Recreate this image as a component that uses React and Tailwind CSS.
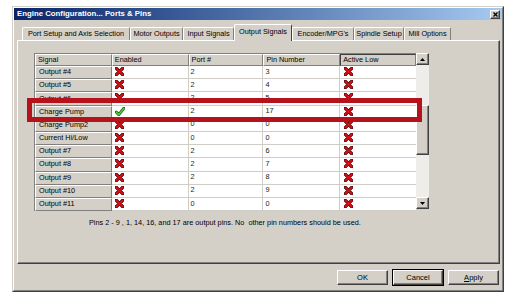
import React from "react";

const rows = [
  { signal: "Output #4", enabled: false, port: 2, pin: 3 },
  { signal: "Output #5", enabled: false, port: 2, pin: 4 },
  { signal: "Output #6", enabled: false, port: 2, pin: 5 },
  { signal: "Charge Pump", enabled: true, port: 2, pin: 17 },
  { signal: "Charge Pump2", enabled: false, port: 0, pin: 0 },
  { signal: "Current Hi/Low", enabled: false, port: 0, pin: 0 },
  { signal: "Output #7", enabled: false, port: 2, pin: 6 },
  { signal: "Output #8", enabled: false, port: 2, pin: 7 },
  { signal: "Output #9", enabled: false, port: 2, pin: 8 },
  { signal: "Output #10", enabled: false, port: 2, pin: 9 },
  { signal: "Output #11", enabled: false, port: 0, pin: 0 },
];

const tabs = [
  { label: "Port Setup and Axis Selection", w: "w-[108px]" },
  { label: "Motor Outputs", w: "w-[53px]" },
  { label: "Input Signals", w: "w-[51px]" },
  { label: "Output Signals", w: "w-[58px]", active: true },
  { label: "Encoder/MPG's", w: "w-[62px]" },
  { label: "Spindle Setup", w: "w-[50px]" },
  { label: "Mill Options", w: "w-[47px]" },
];

function RedX() {
  return (
    <svg width="9" height="9" viewBox="0 0 10 10">
      <path d="M1.5 1.5 L8.5 8.5 M8.5 1.5 L1.5 8.5" stroke="#4a0202" strokeWidth="3.8" strokeLinecap="round" />
      <path d="M1.5 1.5 L8.5 8.5 M8.5 1.5 L1.5 8.5" stroke="#d8101a" strokeWidth="2.2" strokeLinecap="round" />
    </svg>
  );
}

function GreenCheck() {
  return (
    <svg width="10" height="9" viewBox="0 0 10 9">
      <path d="M1.2 5 L3.8 7.6 L9 1.2" fill="none" stroke="#1f5a12" strokeWidth="3" strokeLinecap="round" strokeLinejoin="round" />
      <path d="M1.2 5 L3.8 7.6 L9 1.2" fill="none" stroke="#4fd13a" strokeWidth="1.5" strokeLinecap="round" strokeLinejoin="round" />
    </svg>
  );
}

function Arrow({ down }) {
  return (
    <svg width="5" height="3" viewBox="0 0 5 3">
      <path d={down ? "M0 0 L5 0 L2.5 3 Z" : "M0 3 L5 3 L2.5 0 Z"} fill="#000" />
    </svg>
  );
}

const raised =
  "bg-[#d4d0c8] border border-t-white border-l-white border-r-[#404040] border-b-[#404040] shadow-[inset_-1px_-1px_0_#808080]";

function Button({ children, primary }) {
  return (
    <div
      className={`h-[15px] flex items-center justify-center text-[7.5px] text-black ${raised} ${
        primary ? "outline outline-1 outline-black w-[50px] mx-[1px]" : "w-[51px]"
      }`}
    >
      {children}
    </div>
  );
}

export default function App() {
  return (
    <div className="relative w-[513px] h-[301px] bg-white pt-[6px] pl-[12px] font-['Liberation_Sans',Arial,sans-serif] overflow-hidden">
      {/* Window */}
      <div className="w-[492px] h-[286px] border border-t-[#d4d0c8] border-l-[#d4d0c8] border-r-[#404040] border-b-[#404040]">
        <div className="h-full bg-[#d4d0c8] border border-t-white border-l-white border-r-[#808080] border-b-[#808080]">
          {/* Title bar */}
          <div className="h-[12px] bg-gradient-to-r from-[#0a246a] to-[#a6caf0] flex items-center justify-between pl-[3px] pr-[2px]">
            <span className="text-white font-bold text-[7.8px] leading-none">
              Engine Configuration... Ports &amp; Pins
            </span>
            <div className={`w-[10px] h-[9px] flex items-center justify-center ${raised}`}>
              <svg width="5" height="5" viewBox="0 0 5 5">
                <path d="M0.5 0.5 L4.5 4.5 M4.5 0.5 L0.5 4.5" stroke="#000" strokeWidth="1.3" />
              </svg>
            </div>
          </div>

          <div className="pl-[3px] pr-[2px] pt-[4px]">
            {/* Tabs */}
            <div className="h-[16px] flex items-end pl-[5px] relative z-10">
              {tabs.map((t) =>
                t.active ? (
                  <div
                    key={t.label}
                    className={`${t.w} h-[17px] -mb-[1px] bg-[#d4d0c8] border-t border-l border-r border-t-white border-l-white border-r-[#404040] rounded-t-[2px] flex items-start justify-center pt-[2px] text-[7.3px] text-black whitespace-nowrap`}
                  >
                    {t.label}
                  </div>
                ) : (
                  <div
                    key={t.label}
                    className={`${t.w} h-[13px] bg-[#d4d0c8] border-t border-l border-r border-t-white border-l-white border-r-[#808080] rounded-t-[2px] flex items-center justify-center text-[7.3px] text-black whitespace-nowrap`}
                  >
                    {t.label}
                  </div>
                )
              )}
            </div>

            {/* Panel */}
            <div className="h-[224px] border border-t-white border-l-white border-r-[#404040] border-b-[#404040] shadow-[inset_-1px_-1px_0_#808080] pt-[12px] pl-[16px]">
              <div className="flex w-[395px] h-[158px]">
                {/* Grid */}
                <div className="w-[382px] h-[158px] overflow-hidden border-l border-t border-[#808080] text-[7.3px]">
                  <div className="flex h-[12px]">
                    {[
                      ["Signal", "w-[77px]"],
                      ["Enabled", "w-[77px]"],
                      ["Port #", "w-[75px]"],
                      ["Pin Number", "w-[77px]"],
                    ].map(([h, w]) => (
                      <div
                        key={h}
                        className={`${w} h-full bg-[#d4d0c8] border border-t-white border-l-white border-r-[#808080] border-b-[#808080] flex items-center pl-[2px] text-black`}
                      >
                        {h}
                      </div>
                    ))}
                    <div className="w-[76px] h-full bg-[#d4d0c8] border border-t-[#404040] border-l-[#404040] border-r-[#808080] border-b-[#808080] flex items-center pl-[2px] text-black">
                      Active Low
                    </div>
                  </div>
                  {rows.map((r) => (
                    <div key={r.signal} className="flex h-[13.2px]">
                      <div className="w-[77px] h-full bg-[#d4d0c8] border border-t-white border-l-white border-r-[#808080] border-b-[#808080] flex items-center pl-[3px] text-black">
                        {r.signal}
                      </div>
                      <div className="w-[77px] h-full bg-white border-r border-b border-[#cfcdc8] flex items-start pt-[1px] pl-[3px]">
                        {r.enabled ? <GreenCheck /> : <RedX />}
                      </div>
                      <div className="w-[75px] h-full bg-white border-r border-b border-[#cfcdc8] flex items-center pl-[2px] text-[#222]">
                        {r.port}
                      </div>
                      <div className="w-[77px] h-full bg-white border-r border-b border-[#cfcdc8] flex items-center pl-[2px] text-[#222]">
                        {r.pin}
                      </div>
                      <div className="w-[76px] h-full bg-white border-b border-[#cfcdc8] flex items-start pt-[1px] pl-[4px]">
                        <RedX />
                      </div>
                    </div>
                  ))}
                  {/* sliver of the next row */}
                  <div className="flex h-[13px]">
                    <div className="w-[77px] h-full bg-[#d4d0c8] border border-t-white border-l-white border-r-[#808080] border-b-[#808080]" />
                    <div className="w-[77px] h-full bg-white border-r border-[#cfcdc8]" />
                    <div className="w-[75px] h-full bg-white border-r border-[#cfcdc8]" />
                    <div className="w-[77px] h-full bg-white border-r border-[#cfcdc8]" />
                    <div className="w-[76px] h-full bg-white" />
                  </div>
                </div>

                {/* Scrollbar */}
                <div className="w-[13px] h-[156px] flex flex-col">
                  <div className={`h-[12px] flex items-center justify-center ${raised}`}>
                    <Arrow />
                  </div>
                  <div className="flex-1 bg-[#eeede9]">
                    <div className={`mt-[40px] h-[50px] ${raised}`} />
                  </div>
                  <div className={`h-[12px] flex items-center justify-center ${raised}`}>
                    <Arrow down />
                  </div>
                </div>
              </div>

              <p className="mt-[7px] pl-[55px] text-[7.3px] text-black whitespace-pre leading-[10px]">
                {"Pins 2 - 9 , 1, 14, 16, and 17 are output pins. No  other pin numbers should be used."}
              </p>
            </div>

            {/* Buttons */}
            <div className="mt-[6px] flex justify-end gap-[4px] pr-[1px]">
              <Button>OK</Button>
              <Button primary>Cancel</Button>
              <Button>
                <span>
                  <span className="underline">A</span>pply
                </span>
              </Button>
            </div>
          </div>
        </div>
      </div>

      {/* Highlight */}
      <div className="absolute left-[27px] top-[98px] w-[395px] h-[24px] border-[5px] border-[#b5121b]" />
    </div>
  );
}
